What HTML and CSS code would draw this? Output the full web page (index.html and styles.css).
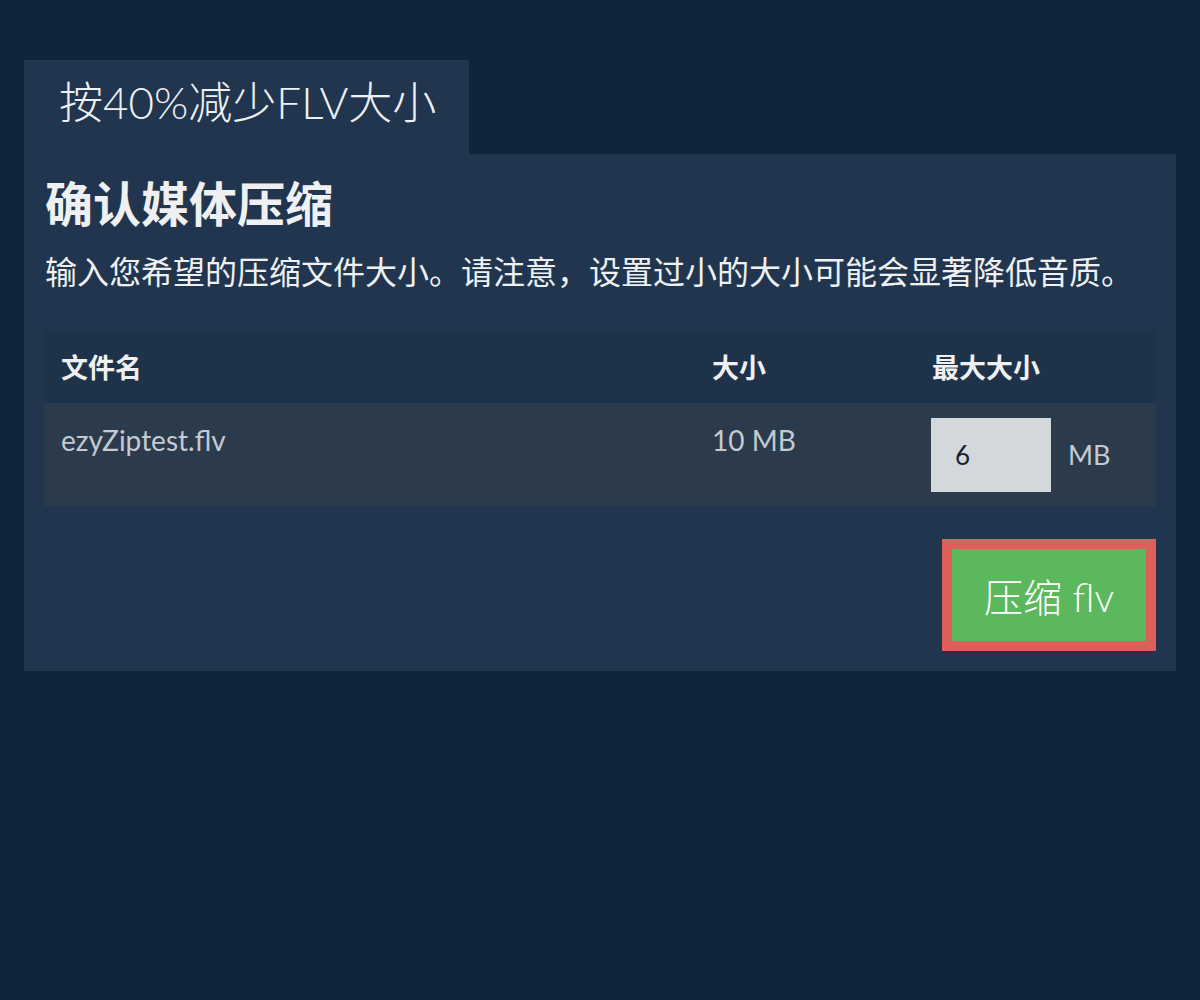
FILE: index.html
```html
<!DOCTYPE html>
<html lang="zh-CN">
<head>
    <meta charset="UTF-8">
    <meta name="viewport" content="width=device-width, initial-scale=1.0">
    <title>按40%减少FLV大小</title>
    <link rel="stylesheet" href="styles.css">
</head>
<body>
    <div class="wrap">
        <div class="tab">按40%减少FLV大小</div>
        <div class="box">
            <h2 class="title">确认媒体压缩</h2>
            <p class="desc">输入您希望的压缩文件大小。请注意，设置过小的大小可能会显著降低音质。</p>
            <table class="files">
                <thead>
                    <tr>
                        <th class="c-name">文件名</th>
                        <th class="c-size">大小</th>
                        <th class="c-max">最大大小</th>
                    </tr>
                </thead>
                <tbody>
                    <tr>
                        <td class="c-name">ezyZiptest.flv</td>
                        <td class="c-size">10 MB</td>
                        <td class="c-max"><input type="text" value="6"><span class="unit">MB</span></td>
                    </tr>
                </tbody>
            </table>
            <div class="actions">
                <button class="go">压缩 flv</button>
            </div>
        </div>
    </div>
</body>
</html>
```

FILE: styles.css
```css
* {
    margin: 0;
    padding: 0;
    box-sizing: border-box;
}
body {
    background-color: #10243a;
    font-family: Lato, "Noto Sans CJK SC", sans-serif;
    color: #eef0f2;
}
.wrap {
    padding: 60px 24px 0 24px;
}
.tab {
    display: inline-block;
    width: 445px;
    height: 94px;
    padding: 14px 0 0 35px;
    background-color: #21364e;
    font-size: 44px;
    font-weight: 300;
    line-height: 56px;
    color: #eef0f2;
}
.box {
    background-color: #21364e;
    padding: 21px 20px 20px 20px;
}
.title {
    font-size: 48px;
    font-weight: bold;
    line-height: 58px;
    padding-left: 1px;
}
.desc {
    font-size: 32px;
    line-height: 44px;
    margin-top: 17px;
    padding-left: 1px;
}
.files {
    width: 100%;
    margin-top: 36px;
    border-collapse: collapse;
}
.files th {
    background-color: #1e3249;
    height: 73px;
    text-align: left;
    font-size: 27px;
    font-weight: bold;
    color: #eef0f2;
    padding: 0 17px;
}
.files td {
    background-color: #2b3b4c;
    vertical-align: top;
    padding: 15px 17px 14px 17px;
    font-size: 28px;
    line-height: 44px;
    color: #c3cad2;
}
.c-name {
    width: 651px;
}
.c-size {
    width: 220px;
}
.files td.c-max {
    padding-left: 16px;
}
.files input {
    width: 120px;
    height: 74px;
    border: none;
    background-color: #d3d8dd;
    font-family: Lato, sans-serif;
    font-size: 26px;
    color: #1a2230;
    padding-left: 24px;
    vertical-align: middle;
    outline: none;
}
.unit {
    margin-left: 17px;
    vertical-align: middle;
    font-size: 27px;
}
.actions {
    display: flex;
    justify-content: flex-end;
    margin-top: 33px;
}
.go {
    width: 214px;
    height: 112px;
    background-color: #5cb85c;
    border: 10px solid #dc5f5a;
    color: #ffffff;
    font-family: Lato, "Noto Sans CJK SC", sans-serif;
    font-size: 39px;
    font-weight: 300;
}
```
